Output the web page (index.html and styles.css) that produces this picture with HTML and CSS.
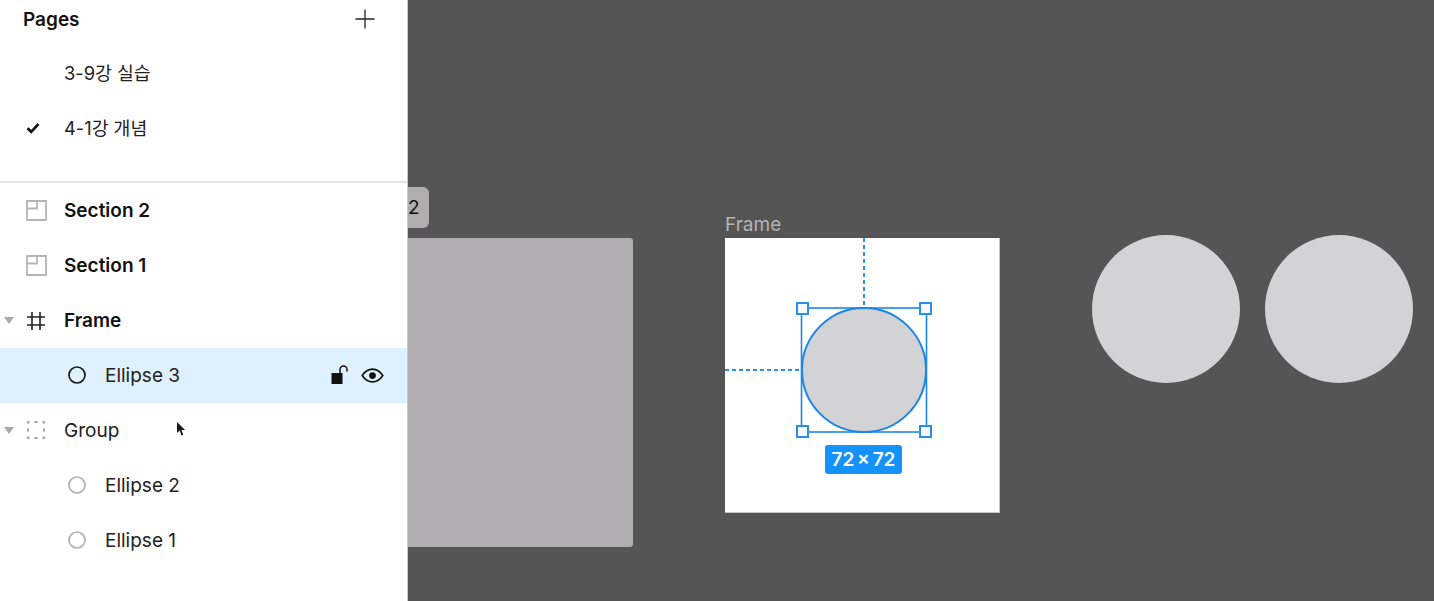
FILE: index.html
```html
<!DOCTYPE html>
<html lang="ko">
<head>
<meta charset="utf-8">
<title>Layers</title>
<link rel="stylesheet" href="styles.css">
</head>
<body>
<div class="app">
  <aside class="panel">
    <section class="pages">
      <header class="pages-head">
        <span class="pages-title">Pages</span>
        <svg class="plus" width="20" height="20" viewBox="0 0 20 20"><path d="M10 0.5V19.5M0.5 10H19.5" stroke="#222" stroke-width="1.3" fill="none"/></svg>
      </header>
      <div class="page-row"><span class="page-name">3-9강 실습</span></div>
      <div class="page-row">
        <svg class="check" width="14" height="12" viewBox="0 0 14 12"><path d="M1.5 6.2L5.2 9.8L12.5 2" stroke="#111" stroke-width="2.6" fill="none"/></svg>
        <span class="page-name">4-1강 개념</span>
      </div>
    </section>
    <section class="layers">
      <div class="row">
        <svg class="type section-icon" width="21" height="21" viewBox="0 0 21 21"><path d="M1 1H20V20H1ZM1 8.500H11V1" fill="none" stroke="#b5b5b5" stroke-width="1.800"/></svg>
        <span class="name strong">Section 2</span>
      </div>
      <div class="row">
        <svg class="type section-icon" width="21" height="21" viewBox="0 0 21 21"><path d="M1 1H20V20H1ZM1 8.500H11V1" fill="none" stroke="#b5b5b5" stroke-width="1.800"/></svg>
        <span class="name strong">Section 1</span>
      </div>
      <div class="row">
        <svg class="caret" width="10" height="7" viewBox="0 0 10 7"><path d="M0 0H10L5 7Z" fill="#a8a8a8"/></svg>
        <svg class="type frame-icon" width="20" height="20" viewBox="0 0 20 20"><path d="M6 1V19M14 1V19M1 6H19M1 14H19" fill="none" stroke="#222" stroke-width="1.6"/></svg>
        <span class="name strong">Frame</span>
      </div>
      <div class="row selected child">
        <svg class="dot" width="18" height="18" viewBox="0 0 18 18"><circle cx="9" cy="9" r="8" fill="none" stroke="#1a1a1a" stroke-width="1.700"/></svg>
        <span class="name">Ellipse 3</span>
        <span class="actions">
          <svg width="18" height="20" viewBox="0 0 18 20"><rect x="0.500" y="8" width="11" height="11" fill="#111"/><path d="M9 8V4.500a3.500 3.500 0 0 1 7 0V6.500" fill="none" stroke="#111" stroke-width="1.500"/></svg>
          <svg width="23" height="15" viewBox="0 0 24 16"><path d="M1 8C4 3.500 8 1.200 12 1.200S20 3.500 23 8C20 12.500 16 14.800 12 14.800S4 12.500 1 8Z" fill="none" stroke="#111" stroke-width="1.700"/><circle cx="12" cy="8" r="3.600" fill="#111"/></svg>
        </span>
      </div>
      <div class="row">
        <svg class="caret" width="10" height="7" viewBox="0 0 10 7"><path d="M0 0H10L5 7Z" fill="#a8a8a8"/></svg>
        <svg class="type group-icon" width="18" height="18" viewBox="0 0 18 18"><path d="M1 1H17V17H1Z" fill="none" stroke="#a4a4a4" stroke-width="2" stroke-dasharray="3 5" stroke-dashoffset="1.500"/></svg>
        <span class="name">Group</span>
        <svg class="pointer" width="10" height="16" viewBox="0 0 10 16"><path d="M1 1V12L3.600 9.600L5.500 14.500L7.300 13.700L5.400 9H9Z" fill="#1a1a1a"/></svg>
      </div>
      <div class="row child">
        <svg class="dot" width="18" height="18" viewBox="0 0 18 18"><circle cx="9" cy="9" r="8" fill="none" stroke="#b0b0b0" stroke-width="1.700"/></svg>
        <span class="name">Ellipse 2</span>
      </div>
      <div class="row child">
        <svg class="dot" width="18" height="18" viewBox="0 0 18 18"><circle cx="9" cy="9" r="8" fill="none" stroke="#b0b0b0" stroke-width="1.700"/></svg>
        <span class="name">Ellipse 1</span>
      </div>
    </section>
  </aside>
  <main class="canvas">
    <div class="section-tag">2</div>
    <div class="section-box"></div>
    <div class="frame-label">Frame</div>
    <div class="frame"></div>
    <div class="disc disc-a"></div>
    <div class="disc disc-b"></div>
    <svg class="selection" width="275" height="275" viewBox="0 0 275 275">
      <path d="M139 0V70M0 132H77" stroke="#2f8fe6" stroke-width="2" stroke-dasharray="4 3" fill="none"/>
      <circle cx="139" cy="132" r="62" fill="#d3d2d4" stroke="#1b86e8" stroke-width="2"/>
      <rect x="76.500" y="70" width="125" height="124" fill="none" stroke="#1b86e8" stroke-width="1.600"/>
      <g fill="#f7fbff" stroke="#2a8de8" stroke-width="2">
        <rect x="72" y="65" width="11" height="11"/>
        <rect x="195" y="65" width="11" height="11"/>
        <rect x="72" y="188" width="11" height="11"/>
        <rect x="195" y="188" width="11" height="11"/>
      </g>
    </svg>
    <div class="size-badge">72 × 72</div>
  </main>
</div>
</body>
</html>
```
FILE: styles.css
```css
* { box-sizing: border-box; }
html, body { margin: 0; padding: 0; height: 100%; overflow: hidden; }
body {
  font-family: Inter, "Noto Sans CJK KR", "Noto Sans", sans-serif;
  color: #1a1a1a;
  background: #555;
}
.app { display: flex; width: 1434px; height: 601px; }
.panel {
  width: 408px;
  flex: none;
  background: #fff;
  border-right: 1px solid #c8c8c8;
  display: flex;
  flex-direction: column;
}
.pages { height: 183px; border-bottom: 2px solid #e3e3e3; }
.pages-head {
  height: 38px;
  margin-bottom: 8px;
  padding: 0 32px 0 23px;
  display: flex;
  align-items: center;
  justify-content: space-between;
}
.pages-title { font-size: 19px; font-weight: 600; color: #111; }
.page-row { height: 55px; position: relative; display: flex; align-items: center; padding: 0 0 3px 64px; }
.page-name { font-size: 18.300px; color: #222; }
.check { position: absolute; left: 26px; top: 21px; }
.layers { display: flex; flex-direction: column; }
.row { height: 55px; flex: none; position: relative; display: flex; align-items: center; padding-left: 64px; }
.row.child { padding-left: 105px; }
.row.selected { background: #dff0fe; }
.type { position: absolute; }
.section-icon { left: 26px; top: 17px; }
.frame-icon { left: 26px; top: 18px; }
.group-icon { left: 27px; top: 18px; }
.caret { position: absolute; left: 4px; top: 24px; }
.dot { position: absolute; left: 68px; top: 18px; }
.name { font-size: 19px; color: #222; }
.name.strong { font-weight: 600; color: #111; }
.actions { position: absolute; left: 331px; top: 17px; display: flex; align-items: center; gap: 12px; }
.pointer { position: absolute; left: 176px; top: 18px; }
.canvas { flex: 1; position: relative; background: #555; overflow: hidden; }
.section-tag {
  position: absolute;
  left: 0; top: 187px;
  width: 21px; height: 41px;
  background: #afadaf;
  border-radius: 0 6px 6px 0;
  color: #111;
  font-size: 19px;
  line-height: 41px;
  text-align: right;
  padding-right: 10px;
}
.section-box {
  position: absolute;
  left: 0; top: 238px;
  width: 225px; height: 309px;
  background: #afadaf;
  border-radius: 0 3px 3px 0;
}
.frame-label { position: absolute; left: 317px; top: 214px; font-size: 19px; color: #b4b4b4; line-height: 22px; }
.frame { position: absolute; left: 317px; top: 238px; width: 275px; height: 275px; background: #fff; box-shadow: inset -1px -1px 0 #c4c4c4; }
.disc { position: absolute; top: 235px; width: 148px; height: 148px; border-radius: 50%; background: #d3d2d4; }
.disc-a { left: 684px; }
.disc-b { left: 857px; }
.selection { position: absolute; left: 317px; top: 238px; }
.size-badge {
  position: absolute;
  left: 417px; top: 445px;
  width: 77px; height: 29px;
  background: #1592fb;
  border-radius: 3px;
  color: #fff;
  font-size: 19px;
  font-weight: 600;
  line-height: 29px;
  text-align: center;
  white-space: nowrap;
  word-spacing: -2px;
}
```
